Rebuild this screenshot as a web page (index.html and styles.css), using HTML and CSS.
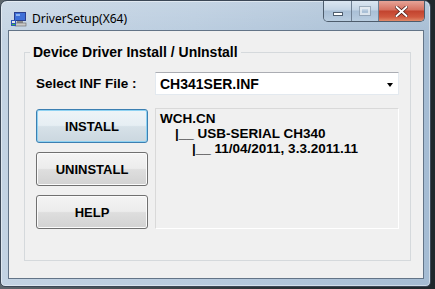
FILE: index.html
```html
<!DOCTYPE html>
<html lang="en">
<head>
  <meta charset="UTF-8">
  <title>DriverSetup(X64)</title>
  <link rel="stylesheet" href="styles.css">
</head>
<body>
  <div class="window">
    <div class="titlebar">
      <svg class="app-icon" width="16" height="16" viewBox="0 0 16 16">
        <rect x="3" y="1" width="12" height="9" fill="#2a3f8f"/>
        <rect x="4" y="2" width="10" height="7" fill="#3d6fd8"/>
        <rect x="5" y="3" width="4" height="2" fill="#8fb4f2"/>
        <rect x="6" y="10" width="6" height="2" fill="#8a8a8a"/>
        <rect x="4" y="12" width="11" height="3" fill="#c9c9c9" stroke="#666" stroke-width="0.6"/>
        <rect x="0" y="9" width="5" height="6" fill="#2f56b8"/>
        <rect x="1" y="10" width="3" height="2" fill="#e8e8e8"/>
        <rect x="1" y="13" width="3" height="1" fill="#3fbf3f"/>
      </svg>
      <span class="title">DriverSetup(X64)</span>
      <div class="captions">
        <div class="cap cap-min"><span class="min-bar"></span></div>
        <div class="cap cap-max"><span class="max-box"></span></div>
        <div class="cap cap-close">
          <svg width="13" height="11" viewBox="0 0 13 11">
            <path d="M1.5 1 L11.5 10 M11.5 1 L1.5 10" stroke="#4a1a14" stroke-width="3.4" stroke-linecap="round"/>
            <path d="M1.5 1 L11.5 10 M11.5 1 L1.5 10" stroke="#fff" stroke-width="2" stroke-linecap="round"/>
          </svg>
        </div>
      </div>
    </div>
    <div class="client">
      <fieldset class="group">
        <legend>Device Driver Install / UnInstall</legend>
        <div class="layout">
          <label class="inf-label">Select INF File :</label>
          <div class="combo">
            <span>CH341SER.INF</span>
            <span class="arrow"></span>
          </div>
          <div class="actions">
            <button class="btn btn-default">INSTALL</button>
            <button class="btn">UNINSTALL</button>
            <button class="btn">HELP</button>
          </div>
          <div class="info">
            <div>WCH.CN</div>
            <div class="lvl1">|__ USB-SERIAL CH340</div>
            <div class="lvl2">|__ 11/04/2011, 3.3.2011.11</div>
          </div>
        </div>
      </fieldset>
    </div>
  </div>
</body>
</html>
```

FILE: styles.css
```css
*{
  box-sizing: border-box;
}
body{
  margin: 0;
  width: 435px;
  height: 289px;
  overflow: hidden;
  background: linear-gradient(to right, #5d666d 0, #2b3338 60%, #1f272c 100%);
  font-family: "Liberation Sans", Arial, sans-serif;
}
.window{
  width: 431px;
  height: 287px;
  display: flex;
  flex-direction: column;
  padding: 0 6px 7px 7px;
  border: 1px solid #3b4756;
  border-radius: 7px 7px 5px 5px;
  background:
    linear-gradient(to bottom, rgba(255,255,255,0.18), rgba(255,255,255,0) 40px),
    linear-gradient(to right, #c3d3e3 0, #b8cbde 45%, #a5bcd3 100%);
  box-shadow: inset 0 0 0 1px rgba(255,255,255,0.45);
}
.titlebar{
  height: 29px;
  display: flex;
  align-items: flex-start;
  padding-left: 3px;
}
.app-icon{
  margin-top: 10px;
}
.title{
  margin-left: 5px;
  margin-top: 9px;
  font-family: "Noto Sans", sans-serif;
  font-size: 12px;
  line-height: 17px;
  color: #000;
}
.captions{
  margin-left: auto;
  margin-right: -1px;
  display: flex;
  height: 21px;
  border: 1px solid #4d5c6c;
  border-top: none;
  border-radius: 0 0 5px 5px;
  overflow: hidden;
}
.cap{
  height: 20px;
  display: flex;
  align-items: center;
  justify-content: center;
  background: linear-gradient(to bottom, #dbe6f1 0, #c3d4e5 45%, #a9bfd6 50%, #b9cde0 100%);
  border-right: 1px solid #6f8093;
}
.cap-min{
  width: 28px;
}
.cap-max{
  width: 27px;
}
.cap-close{
  width: 45px;
  border-right: none;
  background: linear-gradient(to bottom, #e6a498 0, #d5705f 45%, #c2432e 50%, #d0593f 80%, #e08a6a 100%);
}
.min-bar{
  width: 10px;
  height: 4px;
  margin-top: 6px;
  background: #fff;
  border: 1px solid #4f5e6e;
}
.max-box{
  width: 10px;
  height: 8px;
  border: 2px solid #eef2f6;
  outline: 1px solid #8797a8;
  opacity: 0.7;
}
.client{
  flex: 1;
  display: flex;
  flex-direction: column;
  background: #f0f0f0;
  border: 1px solid #637487;
}
.group{
  flex: 1;
  margin: 13px 12px 17px 15px;
  padding: 12px 10px 0 11px;
  border: 1px solid #d5d9dc;
  min-width: 0;
}
.group legend{
  margin-left: -6px;
  padding: 0 3px;
  font-size: 14px;
  line-height: 16px;
  font-weight: bold;
  color: #000;
}
.layout{
  display: grid;
  grid-template-columns: 119px 244px;
  grid-template-rows: 23px 121px;
  row-gap: 13px;
}
.inf-label{
  align-self: center;
  font-size: 13.5px;
  font-weight: bold;
  color: #000;
}
.combo{
  display: flex;
  align-items: center;
  padding-left: 4px;
  background: #fff;
  border: 1px solid #e3e9ef;
  border-top-color: #abadb3;
  font-size: 14px;
  font-weight: bold;
  color: #000;
}
.arrow{
  margin-left: auto;
  margin-right: 5px;
  margin-top: 2px;
  width: 0;
  height: 0;
  border-left: 3.5px solid transparent;
  border-right: 3.5px solid transparent;
  border-top: 4px solid #000;
}
.actions{
  display: flex;
  flex-direction: column;
  gap: 9px;
  padding-top: 1px;
  width: 112px;
}
.btn{
  height: 34px;
  padding: 0;
  font-family: "Liberation Sans", Arial, sans-serif;
  font-size: 13px;
  font-weight: bold;
  color: #000;
  border: 1px solid #707070;
  border-radius: 3px;
  background: linear-gradient(to bottom, #f4f4f4 0, #ececec 48%, #dedede 52%, #d2d2d2 100%);
  box-shadow: inset 0 0 0 1px #fbfbfb;
}
.btn-default{
  border-color: #3c7fb1;
  background: linear-gradient(to bottom, #eef4f8 0, #e6eef3 48%, #d6e1e8 52%, #cbd7df 100%);
  box-shadow: inset 0 0 0 1px #8fd2f2;
}
.info{
  padding: 2px 0 0 4px;
  border: 1px solid #d9d9d9;
  border-right-color: #fff;
  border-bottom-color: #fff;
  font-size: 13.5px;
  line-height: 15px;
  font-weight: bold;
  color: #000;
  white-space: nowrap;
}
.lvl1{
  padding-left: 15px;
}
.lvl2{
  padding-left: 32px;
}
```
